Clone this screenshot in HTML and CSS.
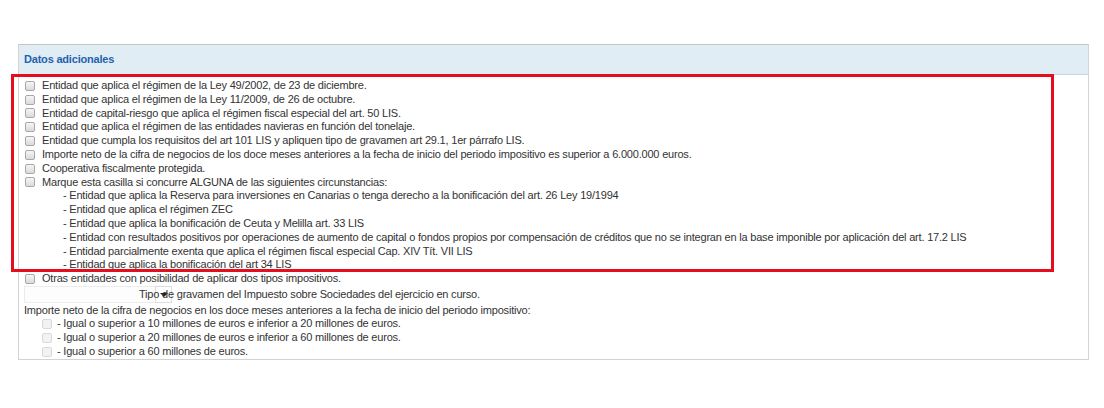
FILE: index.html
```html
<!DOCTYPE html>
<html lang="es">
<head>
    <meta charset="UTF-8">
    <meta name="viewport" content="width=device-width, initial-scale=1.0">
    <title>Datos adicionales</title>
    <link rel="stylesheet" href="styles.css">
</head>
<body>
    <div class="panel">
        <div class="panel-head">Datos adicionales</div>
        <div class="panel-body">
            <label class="opt"><input type="checkbox"><span>Entidad que aplica el régimen de la Ley 49/2002, de 23 de diciembre.</span></label>
            <label class="opt"><input type="checkbox"><span>Entidad que aplica el régimen de la Ley 11/2009, de 26 de octubre.</span></label>
            <label class="opt"><input type="checkbox"><span>Entidad de capital-riesgo que aplica el régimen fiscal especial del art. 50 LIS.</span></label>
            <label class="opt"><input type="checkbox"><span>Entidad que aplica el régimen de las entidades navieras en función del tonelaje.</span></label>
            <label class="opt"><input type="checkbox"><span>Entidad que cumpla los requisitos del art 101 LIS y apliquen tipo de gravamen art 29.1, 1er párrafo LIS.</span></label>
            <label class="opt"><input type="checkbox"><span>Importe neto de la cifra de negocios de los doce meses anteriores a la fecha de inicio del periodo impositivo es superior a 6.000.000 euros.</span></label>
            <label class="opt"><input type="checkbox"><span>Cooperativa fiscalmente protegida.</span></label>
            <label class="opt"><input type="checkbox"><span>Marque esta casilla si concurre ALGUNA de las siguientes circunstancias:</span></label>
            <ul class="sub-list">
                <li>- Entidad que aplica la Reserva para inversiones en Canarias o tenga derecho a la bonificación del art. 26 Ley 19/1994</li>
                <li>- Entidad que aplica el régimen ZEC</li>
                <li>- Entidad que aplica la bonificación de Ceuta y Melilla art. 33 LIS</li>
                <li>- Entidad con resultados positivos por operaciones de aumento de capital o fondos propios por compensación de créditos que no se integran en la base imponible por aplicación del art. 17.2 LIS</li>
                <li>- Entidad parcialmente exenta que aplica el régimen fiscal especial Cap. XIV Tít. VII LIS</li>
                <li>- Entidad que aplica la bonificación del art 34 LIS</li>
            </ul>
            <label class="opt"><input type="checkbox"><span>Otras entidades con posibilidad de aplicar dos tipos impositivos.</span></label>
            <div class="tipo-row">
                <span class="fake-select"><span class="fake-btn"></span></span>
                <span class="tipo-label">Tipo de gravamen del Impuesto sobre Sociedades del ejercicio en curso.</span>
            </div>
            <div class="importe">Importe neto de la cifra de negocios en los doce meses anteriores a la fecha de inicio del periodo impositivo:</div>
            <label class="opt opt-small"><input type="checkbox" disabled><span>- Igual o superior a 10 millones de euros e inferior a 20 millones de euros.</span></label>
            <label class="opt opt-small"><input type="checkbox" disabled><span>- Igual o superior a 20 millones de euros e inferior a 60 millones de euros.</span></label>
            <label class="opt opt-small"><input type="checkbox" disabled><span>- Igual o superior a 60 millones de euros.</span></label>
        </div>
    </div>

    <div class="highlight"></div>
</body>
</html>
```

FILE: styles.css
```css
body { margin: 0; background: #fff; font-family: "Liberation Sans", Arial, sans-serif; font-size: 11px; letter-spacing: -0.2px; color: #333; }
.panel { margin: 44px 0 0 18px; width: 1071px; border: 1px solid #d3d3d3; border-top-color: #c4c4c4; box-sizing: border-box; }
.panel-head { height: 29px; line-height: 29px; padding-left: 5px; background: #e1edf5; border-bottom: 1px solid #c6d7e3; color: #1f62ad; font-weight: bold; }
.panel-body { padding: 4px 5px 0 5px; line-height: 13.8px; }
.opt { display: flex; align-items: center; height: 13.8px; }
.opt input { appearance: none; -webkit-appearance: none; width: 10px; height: 10px; margin: 0 7px 0 1px; border: 1px solid #a8a8a8; border-radius: 2px; background: linear-gradient(#f6f6f6, #dadada); box-sizing: border-box; }
.opt input:disabled { border-color: #d9d9d9; background: #f2f2f2; }
.opt-small { padding-left: 18px; height: 14px; }
.opt-small input { margin: 0 5px 0 0; }
.sub-list { list-style: none; margin: 0; padding: 0 0 0 39px; }
.tipo-row { display: flex; align-items: center; height: 17px; }
.fake-select { position: relative; width: 148px; height: 17px; border: 1px solid #ececec; box-sizing: border-box; background: #fdfdfd; }
.fake-btn { position: absolute; right: -1px; top: -1px; width: 17px; height: 17px; border: 1px solid #dcdcdc; box-sizing: border-box; background: #fff; }
.fake-btn::after { content: ""; position: absolute; left: 4px; top: 6px; border-left: 4px solid transparent; border-right: 4px solid transparent; border-top: 4px solid #222; }
.tipo-label { margin-left: -33px; position: relative; }
.importe { line-height: 14px; }
.highlight { position: absolute; left: 11px; top: 74px; width: 1043px; height: 198px; border: 3px solid #e50e1c; box-sizing: border-box; }
```
